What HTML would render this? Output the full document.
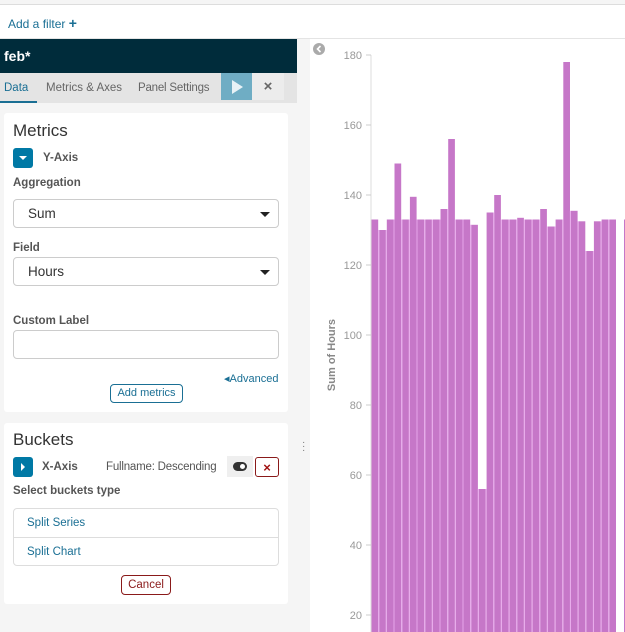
<!DOCTYPE html>
<html><head><meta charset="utf-8"><style>
*{box-sizing:border-box;margin:0;padding:0}
body{width:625px;height:632px;overflow:hidden;background:#f5f5f5;font-family:"Liberation Sans",sans-serif;position:relative;color:#444}
.a{position:absolute}
.card{position:absolute;background:#fff;border-radius:3px}
.lbl{position:absolute;font-size:11.5px;font-weight:bold;color:#555}
.sel{position:absolute;left:13px;width:266px;height:29px;border:1px solid #ccc;border-radius:4px;background:#fff;font-size:13.5px;color:#333;padding:6px 14px}
.caret{position:absolute;right:8px;top:12px;width:0;height:0;border-left:5px solid transparent;border-right:5px solid transparent;border-top:5px solid #222}
.btn{position:absolute;width:20px;height:20px;background:#0079a5;border-radius:3px}
</style></head><body>
<div class="a" style="left:0;top:4px;width:625px;height:35px;background:#fff;border-top:1px solid #ddd;border-bottom:1px solid #e4e4e4"></div>
<div class="a" style="left:8px;top:15px;font-size:12px;color:#1a6f94">Add a filter <b style="font-size:14px">+</b></div>
<div class="a" style="left:0;top:39px;width:297px;height:34px;background:#002c3b"></div>
<div class="a" style="left:4px;top:48px;font-size:14px;font-weight:bold;color:#fff">feb*</div>
<div class="a" style="left:0;top:73px;width:297px;height:30px;background:#e4e4e4"></div>
<div class="a" style="left:4px;top:82px;font-size:11.5px;color:#1a6f94">Data</div>
<div class="a" style="left:0;top:101px;width:37px;height:2px;background:#1a6f94"></div>
<div class="a" style="left:46px;top:82px;font-size:11.5px;color:#666">Metrics &amp; Axes</div>
<div class="a" style="left:138px;top:82px;font-size:11.5px;color:#666;letter-spacing:-0.2px">Panel Settings</div>
<div class="a" style="left:221px;top:73px;width:31px;height:27px;background:#6fadc4"></div>
<div class="a" style="left:232px;top:80px;width:0;height:0;border-top:7px solid transparent;border-bottom:7px solid transparent;border-left:11px solid #e8f2f6"></div>
<div class="a" style="left:252px;top:73px;width:32px;height:27px;background:#ececec;font-size:15px;font-weight:bold;color:#666;text-align:center;line-height:27px">×</div>

<div class="card" style="left:4px;top:113px;width:284px;height:299px"></div>
<div class="a" style="left:13px;top:121px;font-size:17px;color:#333">Metrics</div>
<div class="btn" style="left:13px;top:148px"><div class="a" style="left:6px;top:8px;border-left:4px solid transparent;border-right:4px solid transparent;border-top:4px solid #fff"></div></div>
<div class="lbl" style="left:43px;top:152px">Y-Axis</div>
<div class="lbl" style="left:13px;top:177px">Aggregation</div>
<div class="sel" style="top:199px">Sum<div class="caret"></div></div>
<div class="lbl" style="left:13px;top:242px">Field</div>
<div class="sel" style="top:257px">Hours<div class="caret"></div></div>
<div class="lbl" style="left:13px;top:315px">Custom Label</div>
<div class="sel" style="top:330px;height:29px"></div>
<div class="a" style="left:224px;top:372px;font-size:11px;color:#1a6f94">◂Advanced</div>
<div class="a" style="left:110px;top:384px;width:73px;height:19px;border:1px solid #1a6f94;border-radius:4px;font-size:11px;color:#1a6f94;text-align:center;line-height:17px">Add metrics</div>

<div class="card" style="left:4px;top:423px;width:284px;height:181px"></div>
<div class="a" style="left:13px;top:430px;font-size:17px;color:#333">Buckets</div>
<div class="btn" style="left:13px;top:457px"><div class="a" style="left:8px;top:6px;border-top:4px solid transparent;border-bottom:4px solid transparent;border-left:4px solid #fff"></div></div>
<div class="lbl" style="left:42px;top:461px">X-Axis</div>
<div class="a" style="left:106px;top:461px;font-size:11.5px;color:#555;letter-spacing:-0.2px">Fullname: Descending</div>
<div class="a" style="left:227px;top:456px;width:26px;height:21px;background:#efefef"></div>
<div class="a" style="left:233px;top:462px;width:14px;height:9px;border-radius:5px;background:#333"><div class="a" style="left:7px;top:2px;width:5px;height:5px;border-radius:50%;background:#fff"></div></div>
<div class="a" style="left:255px;top:457px;width:24px;height:20px;border:1px solid #8a1a1a;border-radius:3px;color:#a01010;font-weight:bold;font-size:13px;text-align:center;line-height:19px">×</div>
<div class="lbl" style="left:13px;top:485px">Select buckets type</div>
<div class="a" style="left:13px;top:508px;width:266px;height:58px;border:1px solid #ddd;border-radius:4px"></div>
<div class="a" style="left:13px;top:537px;width:266px;height:1px;background:#ddd"></div>
<div class="a" style="left:27px;top:517px;font-size:11.5px;color:#1a6f94">Split Series</div>
<div class="a" style="left:27px;top:546px;font-size:11.5px;color:#1a6f94">Split Chart</div>
<div class="a" style="left:121px;top:575px;width:50px;height:20px;border:1px solid #8a1a1a;border-radius:4px;font-size:11.5px;color:#8a1a1a;text-align:center;line-height:18px">Cancel</div>

<div class="a" style="left:302px;top:441px;font-size:10px;color:#777;line-height:4px">·<br>·<br>·</div>
<div class="a" style="left:310px;top:39px;width:315px;height:593px;background:#fff"></div>
<svg class="a" style="left:0;top:0" width="625" height="632">
<circle cx="319" cy="49" r="6" fill="#aaa"/><path d="M320.5 46 L317.5 49 L320.5 52" stroke="#fff" stroke-width="1.6" fill="none"/>
<line x1="371" y1="55" x2="371" y2="632" stroke="#ddd"/>
<g font-family="Liberation Sans" font-size="11" fill="#999" text-anchor="end">
<text x="362" y="59">180</text><text x="362" y="129">160</text><text x="362" y="199">140</text><text x="362" y="269">120</text><text x="362" y="339">100</text><text x="362" y="409">80</text><text x="362" y="479">60</text><text x="362" y="549">40</text><text x="362" y="619">20</text>
</g>
<g stroke="#ccc"><line x1="366" y1="55" x2="371" y2="55"/><line x1="366" y1="125" x2="371" y2="125"/><line x1="366" y1="195" x2="371" y2="195"/><line x1="366" y1="265" x2="371" y2="265"/><line x1="366" y1="335" x2="371" y2="335"/><line x1="366" y1="405" x2="371" y2="405"/><line x1="366" y1="475" x2="371" y2="475"/><line x1="366" y1="545" x2="371" y2="545"/><line x1="366" y1="615" x2="371" y2="615"/></g>
<text x="335" y="355" transform="rotate(-90 335 355)" font-family="Liberation Sans" font-size="11" font-weight="bold" fill="#888" text-anchor="middle">Sum of Hours</text>
<g id="bars" fill="#c677c8"></g>
</svg>
<script>
var v=[133,130,133,149,133,139.5,133,133,133,136,156,133,133,131.5,56,135,140,133,133,133.5,133,133,136,131,133,178,135.5,132.5,124,132.5,133,133];
var g=document.getElementById('bars'),s='';
for(var i=0;i<v.length;i++){var x=371.5+i*7.67,y=685-3.5*v[i];s+='<rect x="'+x.toFixed(1)+'" y="'+y.toFixed(1)+'" width="6.7" height="'+(632-y).toFixed(1)+'"/>';
if(i>0){var m=Math.max(y,685-3.5*v[i-1]);s+='<rect x="'+(x-1).toFixed(1)+'" y="'+m.toFixed(1)+'" width="1" height="'+(632-m).toFixed(1)+'" fill="#e6a6ea"/>';}}
s+='<rect x="624" y="219.5" width="1" height="413"/>';
g.innerHTML=s;
</script>
</body></html>
